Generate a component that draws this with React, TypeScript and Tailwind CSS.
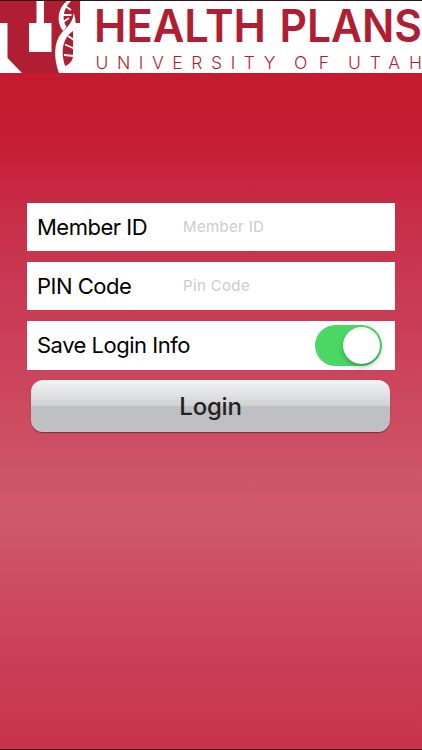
import { useState } from 'react'

function BrandLogo() {
  return (
    <svg width="422" height="72" viewBox="0 1 422 72" className="block overflow-visible" role="img" aria-label="Health Plans, University of Utah">
      <rect y="1" width="422" height="72" fill="#fff" />
      {/* block U */}
      <path d="M0 1H80V23H73V60L66 73H22L7.5 58V23H0Z" fill="#b01e33" />
      <path d="M36.5 1H44V23H51.5V52H29V23H36.5Z" fill="#fff" />
      {/* helix */}
      <path d="M67 1C59 7 56.5 18 60.5 27L63 31L66.5 27C61.5 19 63 9 71 1Z" fill="#fff" />
      <path d="M73.5 13C73.5 22 67 27 61.5 33C53 43 54 60 59 73H80V23H75.5C75.5 19 75 16 73.5 13Z" fill="#fff" />
      <path d="M73 31C63 38 60 50 65 66C70 64 73 60 73 56Z" fill="#b01e33" />
      <path d="M65 6L71 10M63 15H71.5M63 22L69 18M68 36L74 40M65 44.5L74 48.5M64 55L74 56" stroke="#fff" strokeWidth="1.8" />
      <g fill="#b01e33" className="font-['Inter',sans-serif] text-[45.5px] font-semibold">
        <text x="94" y="41.5" textLength="172" lengthAdjust="spacingAndGlyphs">HEALTH</text>
        <text x="279.5" y="41.5" textLength="142.5" lengthAdjust="spacingAndGlyphs">PLANS</text>
      </g>
      <g fill="#b01e33" className="font-['Inter',sans-serif] text-[17.5px] font-light">
        <text x="95.5" y="69" textLength="180">UNIVERSITY</text>
        <text x="294" y="69" textLength="35">OF</text>
        <text x="348" y="69" textLength="74">UTAH</text>
      </g>
    </svg>
  )
}

interface FieldProps {
  label: string
  placeholder: string
  value: string
  onChange: (value: string) => void
}

function Field({ label, placeholder, value, onChange }: FieldProps) {
  return (
    <label className="flex h-[48.6px] items-center bg-white pl-[10px]">
      <span className="w-[146px] pt-px text-[22px] tracking-[-0.5px]">{label}</span>
      <input
        className="min-w-0 flex-1 bg-transparent text-[15px] tracking-[0.35px] outline-none placeholder:text-[#cbcbd0]"
        placeholder={placeholder}
        value={value}
        onChange={(e) => onChange(e.target.value)}
      />
    </label>
  )
}

export default function App() {
  const [memberId, setMemberId] = useState('')
  const [pin, setPin] = useState('')
  const [save, setSave] = useState(true)

  return (
    <div className="flex h-[750px] w-[422px] flex-col border-y border-[#30141c] bg-[linear-gradient(180deg,#c41b2e_73px,#c51c35_135px,#c8304a_225px,#cb4058_345px,#cf5a6c_510px,#cb4359_635px,#c8324a_749px)] font-['Inter',sans-serif] text-black">
      <header className="h-[72px] shrink-0">
        <BrandLogo />
      </header>
      <form className="mx-[27px] mt-[129.6px] flex flex-col gap-[10.6px]" onSubmit={(e) => e.preventDefault()}>
        <Field label="Member ID" placeholder="Member ID" value={memberId} onChange={setMemberId} />
        <Field label="PIN Code" placeholder="Pin Code" value={pin} onChange={setPin} />
        <div className="flex h-[48.6px] items-center justify-between bg-white pr-[13px] pl-[10px]">
          <span className="pt-px text-[22px] tracking-[-0.5px]">Save Login Info</span>
          <button
            type="button"
            role="switch"
            aria-checked={save}
            aria-label="Save Login Info"
            onClick={() => setSave(!save)}
            className={save ? 'flex h-[41px] w-[67px] justify-end rounded-full bg-[#4bd763] p-[2px]' : 'flex h-[41px] w-[67px] rounded-full bg-gray-200 p-[2px]'}
          >
            <span className="size-[37px] rounded-full bg-white shadow-[0_3px_5px_rgba(0,0,0,0.25)]" />
          </button>
        </div>
        <button
          type="submit"
          className="mr-[5px] ml-[4px] h-[52px] rounded-[12px] bg-[linear-gradient(180deg,#f5f5f6_0%,#d0d1d3_50%,#bfc0c4_50%,#bfc0c4_100%)] pt-[2px] text-[24px] font-medium tracking-[-0.2px] text-[#222] shadow-[0_1px_1px_rgba(70,20,30,0.6)]"
        >
          Login
        </button>
      </form>
    </div>
  )
}
